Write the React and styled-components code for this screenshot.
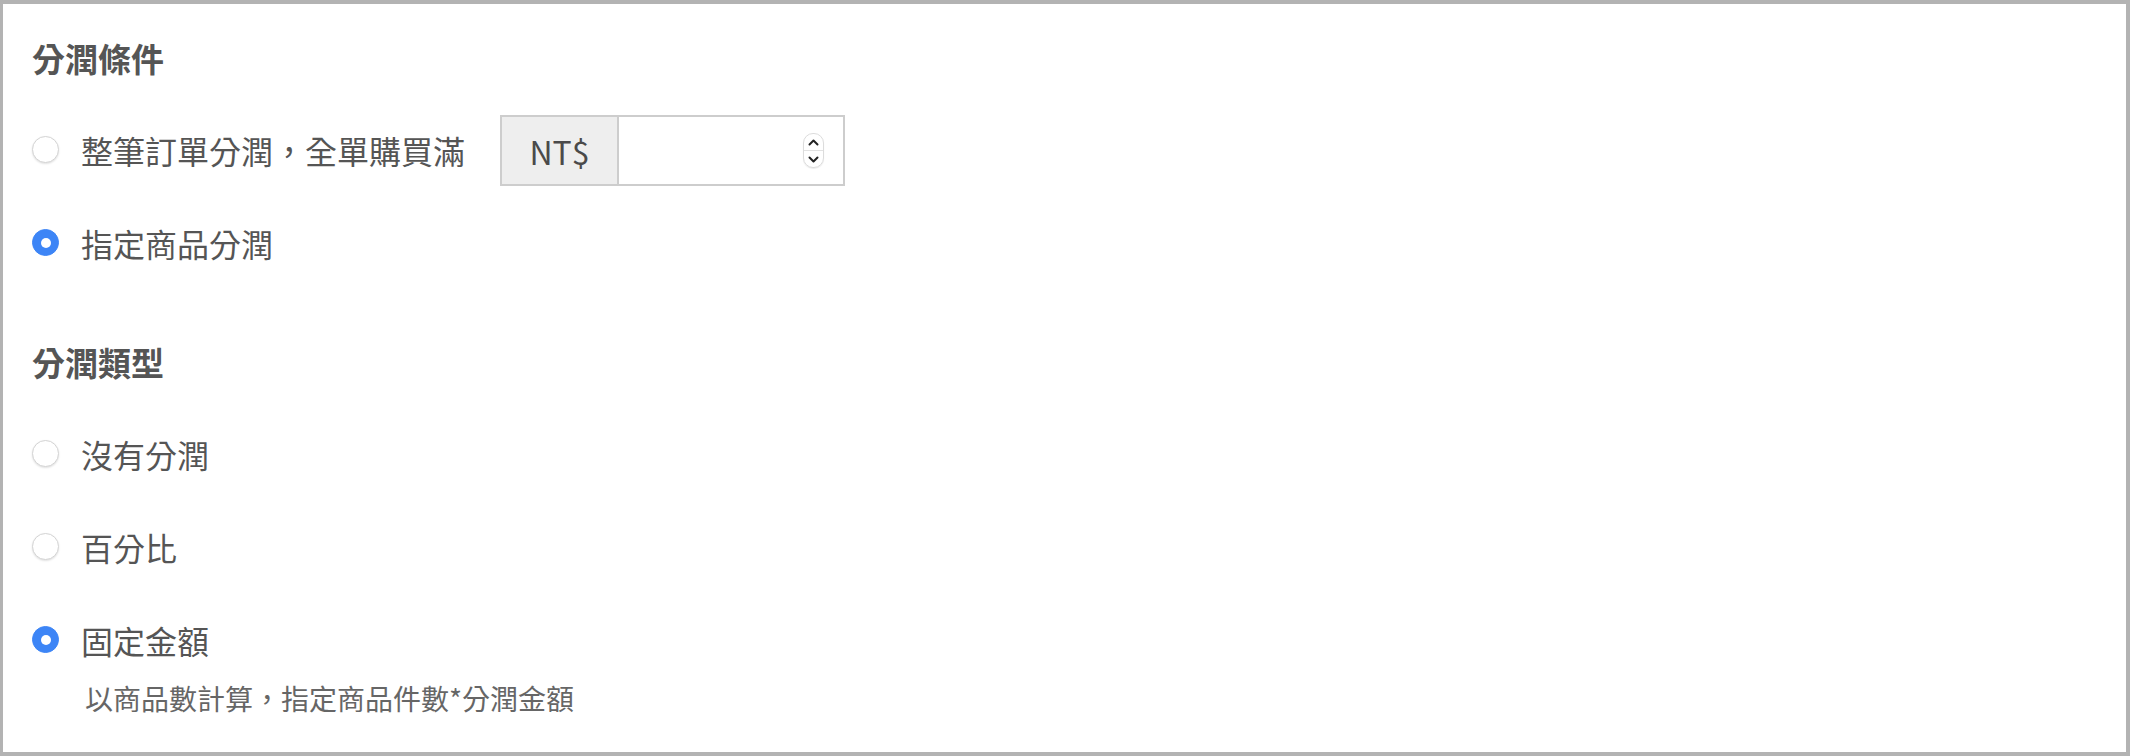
import React from "react";
import styled, { createGlobalStyle } from "styled-components";

const GlobalStyle = createGlobalStyle`
  html, body {
    margin: 0;
    padding: 0;
    background: #ffffff;
  }
  body {
    font-family: "Noto Sans CJK TC", "Noto Sans", sans-serif;
    color: #555555;
  }
`;

const Panel = styled.div`
  box-sizing: border-box;
  width: 100vw;
  height: 100vh;
  background: #ffffff;
  border: 4px solid #b3b3b3;
  border-left-width: 3px;
  padding: 34px 29px 0;
`;

const Section = styled.section`
  & + & {
    margin-top: 53px;
  }
`;

const Heading = styled.h2`
  margin: 0 0 25px;
  font-size: 33px;
  line-height: 40px;
  font-weight: 700;
  color: #555555;
`;

const Option = styled.label`
  display: flex;
  align-items: center;
  min-height: 93px;
  cursor: pointer;
`;

const Radio = styled.input.attrs({ type: "radio" })`
  appearance: none;
  box-sizing: border-box;
  flex: none;
  width: 27px;
  height: 27px;
  margin: 0 22px 0 0;
  border-radius: 50%;
  background: #ffffff;
  border: 1px solid #d4d4d4;
  box-shadow: 0 1px 2px rgba(0, 0, 0, 0.12);
  display: grid;
  place-items: center;

  &:checked {
    background: #3d85f6;
    border-color: #3d85f6;
    box-shadow: none;
  }
  &:checked::after {
    content: "";
    width: 10px;
    height: 10px;
    border-radius: 50%;
    background: #ffffff;
  }
`;

const LabelText = styled.span`
  font-size: 32px;
  line-height: 40px;
  color: #555555;
`;

const Help = styled.div`
  margin: 0 0 0 53px;
  font-size: 28px;
  line-height: 24px;
  color: #666666;
`;

const InputGroup = styled.div`
  display: flex;
  margin: 2px 0 0 35px;
  height: 71px;
  box-sizing: border-box;
  border: 2px solid #cdcdcd;
`;

const Addon = styled.span`
  width: 115px;
  display: flex;
  align-items: center;
  justify-content: center;
  background: #eeeeee;
  border-right: 2px solid #cdcdcd;
  font-size: 32px;
  color: #4a4a4a;
`;

const Field = styled.div`
  width: 224px;
  display: flex;
  align-items: center;
  padding-right: 19px;
  box-sizing: border-box;
  background: #ffffff;
`;

const NumberInput = styled.input.attrs({ type: "text", inputMode: "numeric" })`
  flex: 1;
  min-width: 0;
  border: none;
  outline: none;
  font: inherit;
  font-size: 30px;
  padding: 0 12px;
  background: transparent;
`;

const Spinner = styled.span`
  flex: none;
  width: 21px;
  height: 35px;
  box-sizing: border-box;
  border: 1px solid #dcdcdc;
  border-radius: 10px;
  box-shadow: 0 1px 1px rgba(0, 0, 0, 0.08);
  display: flex;
  flex-direction: column;
  overflow: hidden;
`;

const SpinHalf = styled.span`
  flex: 1;
  display: flex;
  align-items: center;
  justify-content: center;
  & + & {
    border-top: 1px solid #e2e2e2;
  }
`;

const Chevron = ({ up }) => (
  <svg width="11" height="7" viewBox="0 0 11 7">
    <path
      d={up ? "M1.5 5.5 L5.5 1.5 L9.5 5.5" : "M1.5 1.5 L5.5 5.5 L9.5 1.5"}
      fill="none"
      stroke="#222"
      strokeWidth="2"
      strokeLinecap="round"
      strokeLinejoin="round"
    />
  </svg>
);

export default function App() {
  return (
    <>
      <GlobalStyle />
      <Panel>
        <Section>
          <Heading>分潤條件</Heading>
          <Option>
            <Radio name="condition" />
            <LabelText>整筆訂單分潤，全單購買滿</LabelText>
            <InputGroup>
              <Addon>NT$</Addon>
              <Field>
                <NumberInput />
                <Spinner>
                  <SpinHalf><Chevron up /></SpinHalf>
                  <SpinHalf><Chevron /></SpinHalf>
                </Spinner>
              </Field>
            </InputGroup>
          </Option>
          <Option>
            <Radio name="condition" defaultChecked />
            <LabelText>指定商品分潤</LabelText>
          </Option>
        </Section>
        <Section>
          <Heading>分潤類型</Heading>
          <Option>
            <Radio name="type" />
            <LabelText>沒有分潤</LabelText>
          </Option>
          <Option>
            <Radio name="type" />
            <LabelText>百分比</LabelText>
          </Option>
          <Option>
            <Radio name="type" defaultChecked />
            <LabelText>固定金額</LabelText>
          </Option>
          <Help>以商品數計算，指定商品件數*分潤金額</Help>
        </Section>
      </Panel>
    </>
  );
}
